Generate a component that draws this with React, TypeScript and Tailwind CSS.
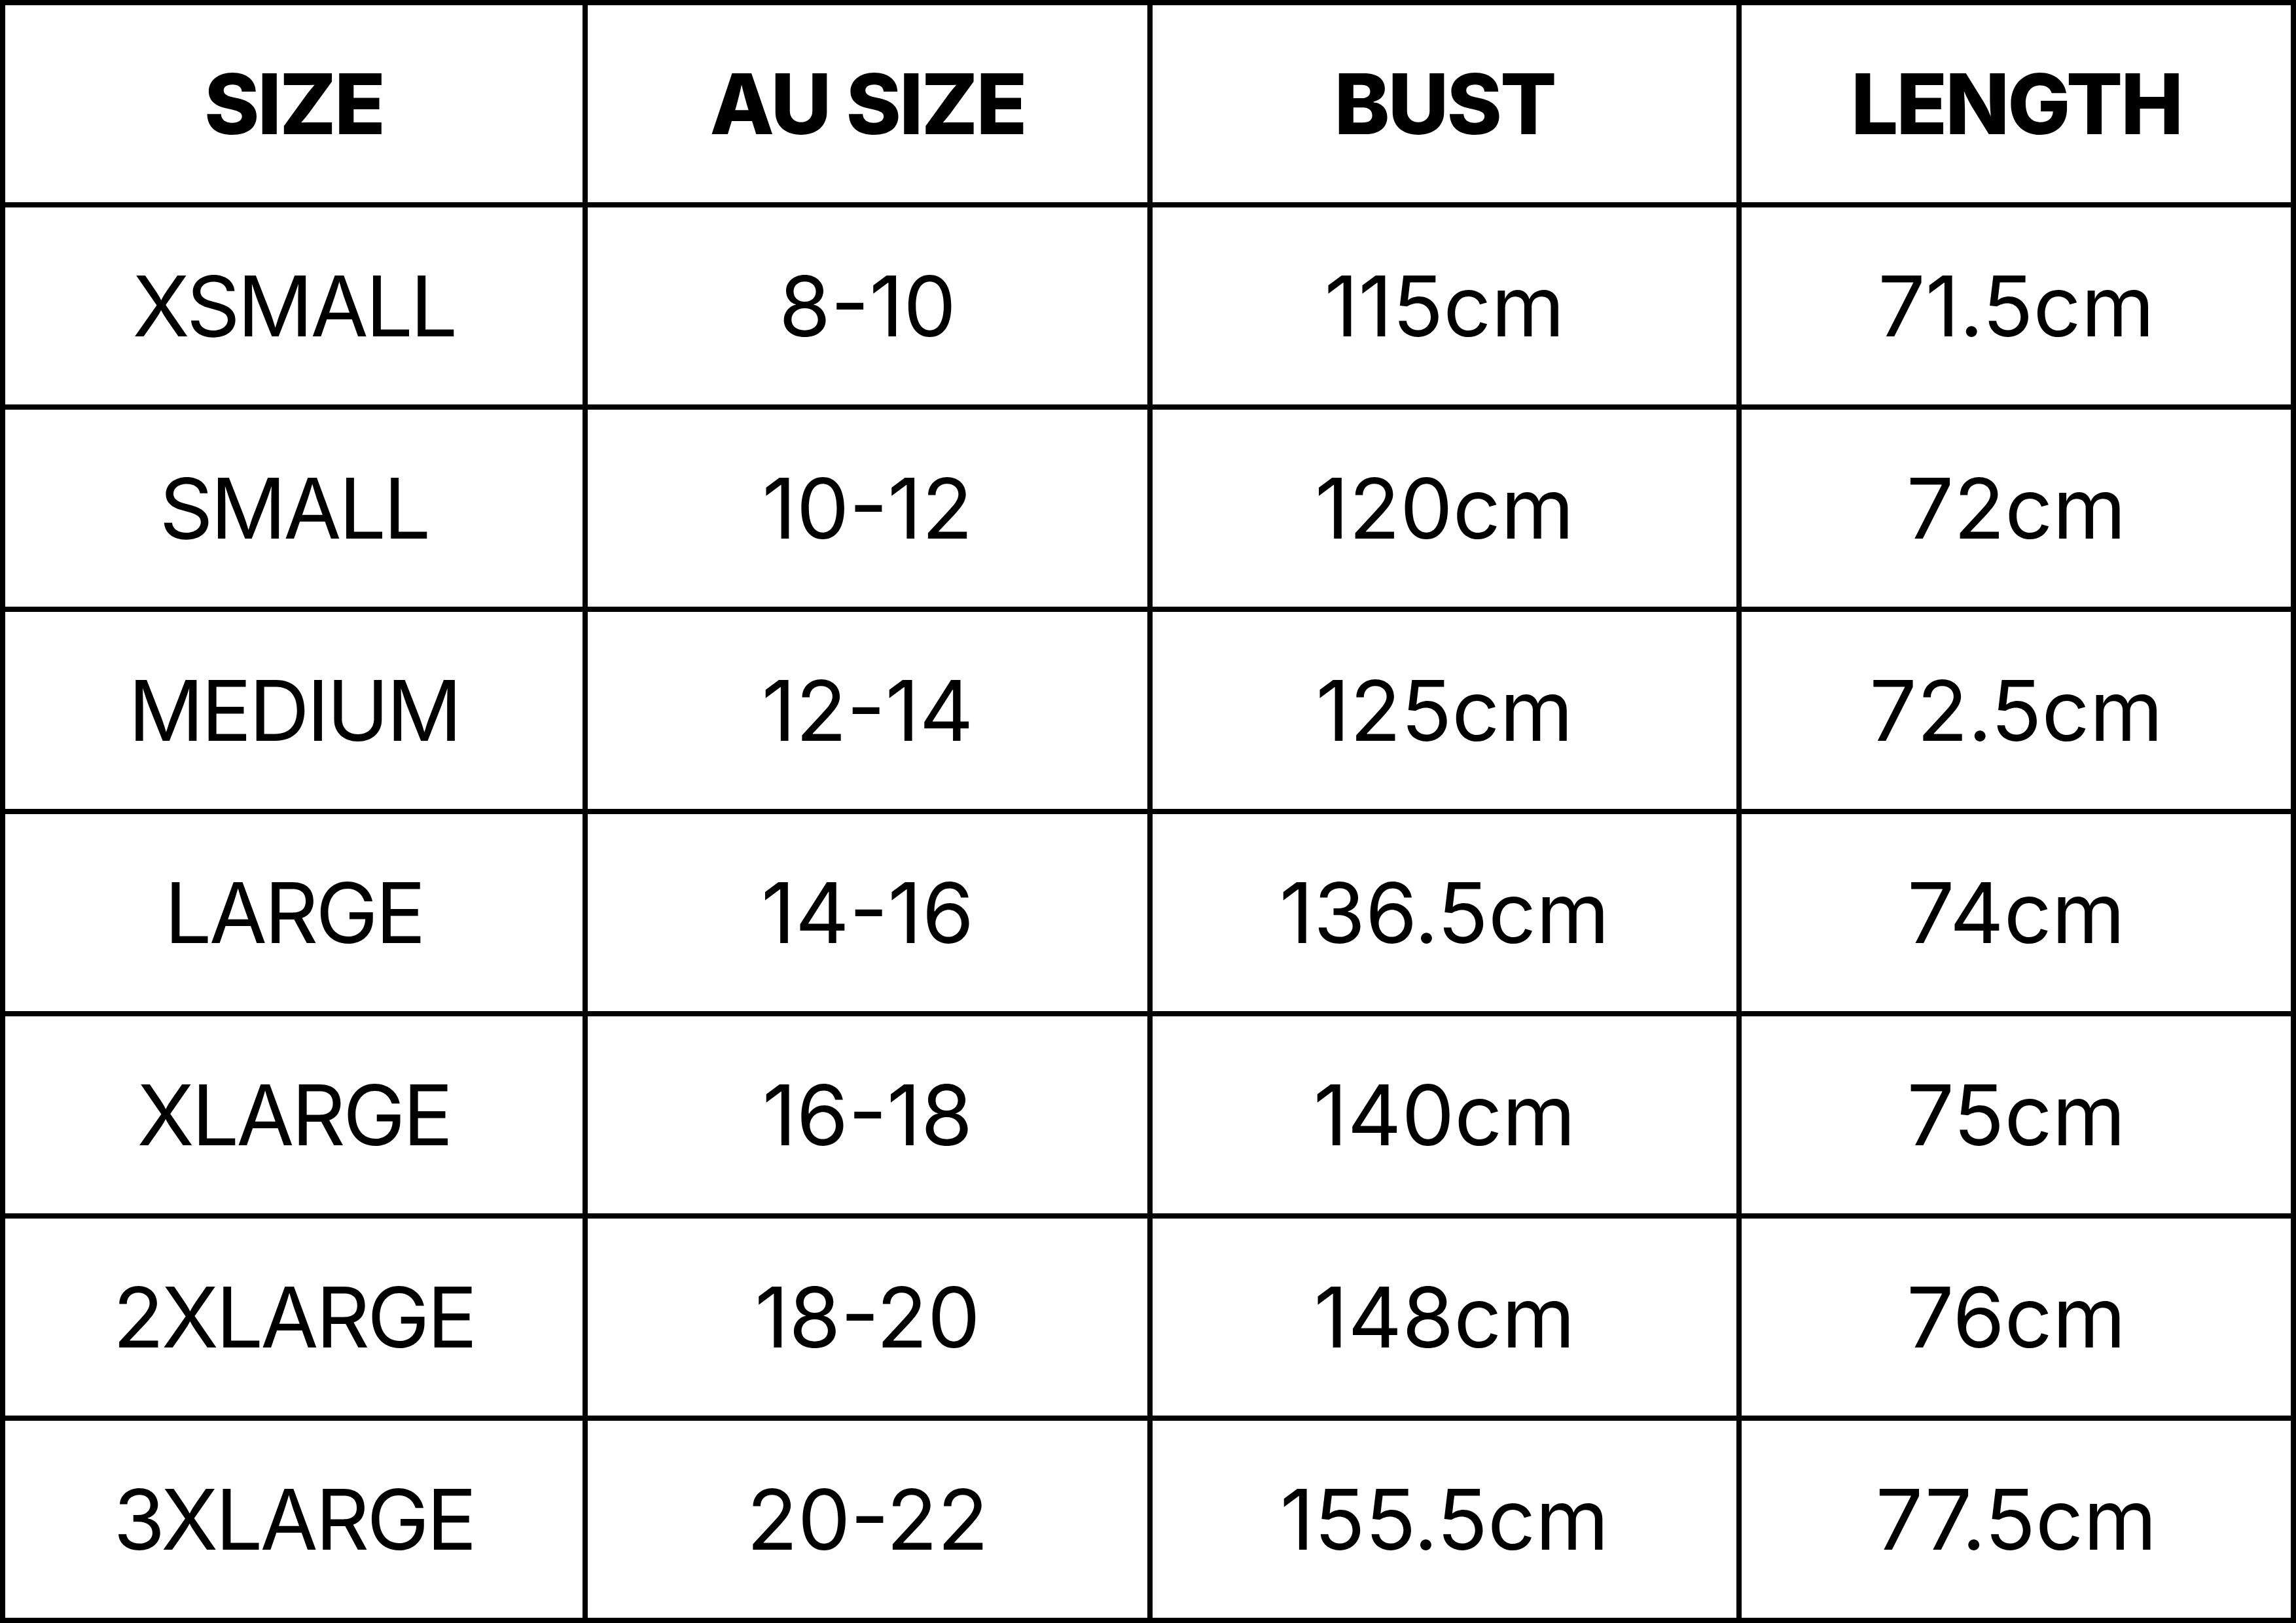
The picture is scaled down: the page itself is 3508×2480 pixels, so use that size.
const HEADERS = ['SIZE', 'AU SIZE', 'BUST', 'LENGTH']

const ROWS = [
  ['XSMALL', '8-10', '115cm', '71.5cm'],
  ['SMALL', '10-12', '120cm', '72cm'],
  ['MEDIUM', '12-14', '125cm', '72.5cm'],
  ['LARGE', '14-16', '136.5cm', '74cm'],
  ['XLARGE', '16-18', '140cm', '75cm'],
  ['2XLARGE', '18-20', '148cm', '76cm'],
  ['3XLARGE', '20-22', '155.5cm', '77.5cm'],
]

export default function App() {
  return (
    <div className="w-[3508px] h-[2480px] bg-black p-[8px] grid grid-cols-[882px_855px_892px_839px] grid-rows-[repeat(8,301px)] gap-[8px] font-['Inter',sans-serif] text-black">
      {HEADERS.map(h => (
        <div key={h} className="bg-white flex items-center justify-center text-[128px] font-extrabold leading-none tracking-[-3px]">
          {h}
        </div>
      ))}
      {ROWS.map(row =>
        row.map((cell, i) => (
          <div
            key={row[0] + i}
            className={
              i === 0
                ? 'bg-white flex items-center justify-center text-[128px] font-normal leading-none tracking-[-4px]'
                : 'bg-white flex items-center justify-center text-[128px] font-normal leading-none'
            }
          >
            {cell}
          </div>
        ))
      )}
    </div>
  )
}
